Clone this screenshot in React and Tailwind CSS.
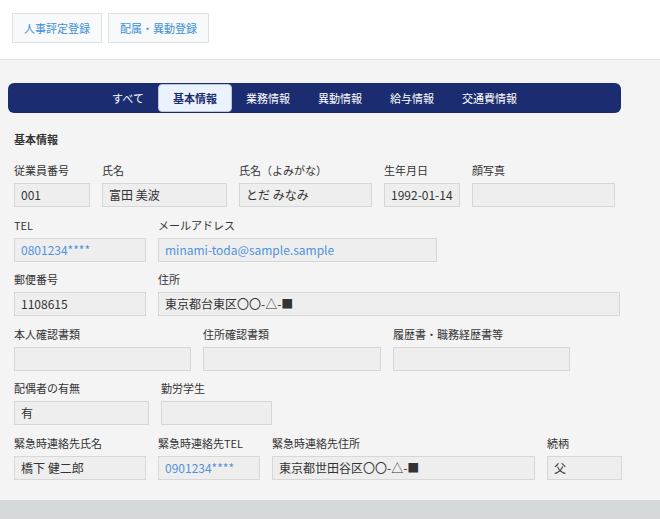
import { memo } from "react";

// Constants
const TABS = ["すべて", "基本情報", "業務情報", "異動情報", "給与情報", "交通費情報"];
const ACTIVE_TAB = "基本情報";

const ROWS = [
  [
    { label: "従業員番号", value: "001", w: "w-[76px]" },
    { label: "氏名", value: "富田 美波", w: "w-[125px]" },
    { label: "氏名（よみがな）", value: "とだ みなみ", w: "w-[133px]" },
    { label: "生年月日", value: "1992-01-14", w: "w-[76px]" },
    { label: "顔写真", value: "", w: "w-[143px]" }
  ],
  [
    { label: "TEL", value: "0801234****", w: "w-[132px]", link: true },
    { label: "メールアドレス", value: "minami-toda@sample.sample", w: "w-[279px]", link: true }
  ],
  [
    { label: "郵便番号", value: "1108615", w: "w-[132px]" },
    { label: "住所", value: "東京都台東区〇〇-△-■", w: "w-[462px]" }
  ],
  [
    { label: "本人確認書類", value: "", w: "w-[177px]" },
    { label: "住所確認書類", value: "", w: "w-[178px]" },
    { label: "履歴書・職務経歴書等", value: "", w: "w-[177px]" }
  ],
  [
    { label: "配偶者の有無", value: "有", w: "w-[135px]" },
    { label: "勤労学生", value: "", w: "w-[111px]" }
  ],
  [
    { label: "緊急時連絡先氏名", value: "橋下 健二郎", w: "w-[132px]" },
    { label: "緊急時連絡先TEL", value: "0901234****", w: "w-[102px]", link: true },
    { label: "緊急時連絡先住所", value: "東京都世田谷区〇〇-△-■", w: "w-[263px]" },
    { label: "続柄", value: "父", w: "w-[75px]" }
  ]
];

const Field = memo(({ label, value, w, link }) => (
  <div className={`${w} shrink-0 flex flex-col`}>
    <span className="text-[11px] leading-[16px] text-[#333] whitespace-nowrap">{label}</span>
    <div
      className={`mt-[5px] h-[24px] border border-[#d7d7d7] bg-[#eeeeee] pl-[6px] flex items-center text-[12px] whitespace-nowrap overflow-hidden
        ${link ? "text-[#4f93dc]" : "text-[#333]"}`}
    >
      {value}
    </div>
  </div>
));

export default function App() {
  return (
    <div
      className="w-[660px] h-[519px] overflow-hidden flex flex-col"
      style={{ fontFamily: '"Noto Sans CJK JP", "Noto Sans", sans-serif' }}
    >
      {/* Header buttons */}
      <div className="h-[60px] shrink-0 bg-white border-b border-[#e4e4e4] flex items-start gap-[6px] pt-[13px] pl-[12px]">
        <button className="h-[30px] px-[11px] bg-[#f7f9fb] border border-[#dde2e7] text-[11px] text-[#3b8fd8]">
          人事評定登録
        </button>
        <button className="h-[30px] px-[11px] bg-[#f7f9fb] border border-[#dde2e7] text-[11px] text-[#3b8fd8]">
          配属・異動登録
        </button>
      </div>

      {/* Main */}
      <div className="flex-1 bg-[#f4f4f4] pt-[23px] pl-[8px] pr-[39px]">
        <div className="h-[30px] rounded-[6px] bg-[#1b2d70] flex items-center justify-center">
          {TABS.map((tab) => (
            <div
              key={tab}
              className={`h-[28px] px-[14px] flex items-center text-[11px] rounded-[4px]
                ${tab === ACTIVE_TAB
                  ? "bg-[#eaf2fd] border border-[#b9c6dc] text-[#1b2d70] font-bold"
                  : "text-white"}`}
            >
              {tab}
            </div>
          ))}
        </div>

        <div className="px-[6px] pt-[18px]">
          <h2 className="text-[11px] leading-[16px] font-bold text-[#333]">基本情報</h2>
          <div className="mt-[15px] flex flex-col gap-y-[9.6px]">
            {ROWS.map((row, i) => (
              <div key={i} className="flex gap-[12px]">
                {row.map((f) => (
                  <Field key={f.label} {...f} />
                ))}
              </div>
            ))}
          </div>
        </div>
      </div>

      {/* Footer strip */}
      <div className="h-[19px] shrink-0 bg-[#d6d9d9]" />
    </div>
  );
}
